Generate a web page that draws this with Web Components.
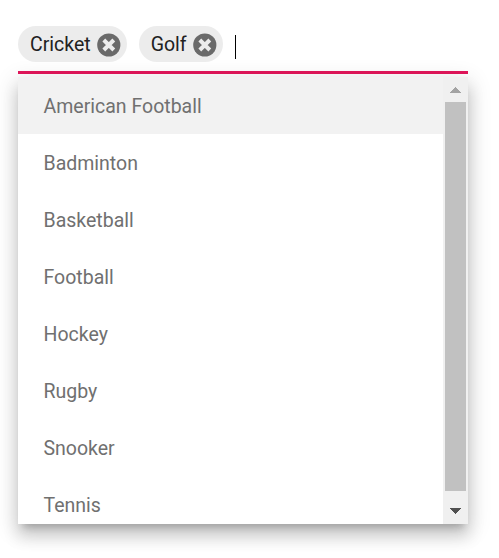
<!DOCTYPE html>
<html lang="en"><head><meta charset="utf-8"><title>Favorite sports</title>
<style>
body{margin:0;height:100vh;background:#fff;font-family:Roboto,"Liberation Sans",sans-serif;font-size:19.5px;overflow:hidden}
</style></head><body>
<multi-select>
<sport-chip slot="chips">Cricket</sport-chip><sport-chip slot="chips">Golf</sport-chip>
<list-option active>American Football</list-option><list-option>Badminton</list-option><list-option>Basketball</list-option><list-option>Football</list-option><list-option>Hockey</list-option><list-option>Rugby</list-option><list-option>Snooker</list-option><list-option>Tennis</list-option>
</multi-select>
<script>
const define=(name,html)=>customElements.define(name,class extends HTMLElement{
  constructor(){super();this.attachShadow({mode:'open'}).innerHTML=html;}
});
define('sport-chip',`<style>
:host{display:flex;align-items:flex-start;height:36px;box-sizing:border-box;padding:0 6px 0 12px;margin-right:12px;border-radius:18px;background:#ececec;color:#212121}
span{line-height:38px}
svg{display:block;width:24px;height:24px;margin:7px 0 0 6px}
</style><span><slot></slot></span>
<svg viewBox="0 0 24 24"><circle cx="11.8" cy="12" r="11.6" fill="#6a6a6a"/><path d="M6.8 7l10 10M16.8 7l-10 10" stroke="#ececec" stroke-width="4"/></svg>`);
define('list-option',`<style>
:host{display:block;height:57px;line-height:59px;padding-left:25.5px;color:#707070}
:host([active]){background:#f2f2f2}
</style><slot></slot>`);
define('scroll-bar',`<style>
:host{display:flex;flex-direction:column;width:25px;box-sizing:border-box;padding:0 2px;background:#f0f0f0}
svg{display:block;width:21px;height:25px}
.end{height:33px}
i{display:block;flex:1;background:#c1c1c1}
</style><svg viewBox="0 0 21 25" shape-rendering="crispEdges"><path d="M5 16h11l-5.5-6z" fill="#a3a3a3"/></svg><i></i>
<svg class="end" viewBox="0 0 21 33" shape-rendering="crispEdges"><path d="M5 17h11l-5.5 6z" fill="#505050"/></svg>`);
define('multi-select',`<style>
:host{display:block;width:450px;padding:26px 0 0 18px}
.field{display:flex;height:45px;border-bottom:3px solid #e3165b}
.caret{width:1px;height:24px;margin-top:9px;background:#000}
.popup{display:flex;height:447px;margin-top:3px;background:#fff;box-shadow:0 7.5px 7.5px -4.5px rgba(0,0,0,.2),0 12px 15px 1.5px rgba(0,0,0,.14),0 4.5px 21px 3px rgba(0,0,0,.12)}
.list{flex:1;overflow:hidden}
</style><div class="field"><slot name="chips"></slot><div class="caret"></div></div>
<div class="popup"><div class="list"><slot></slot></div><scroll-bar></scroll-bar></div>`);
</script></body></html>
